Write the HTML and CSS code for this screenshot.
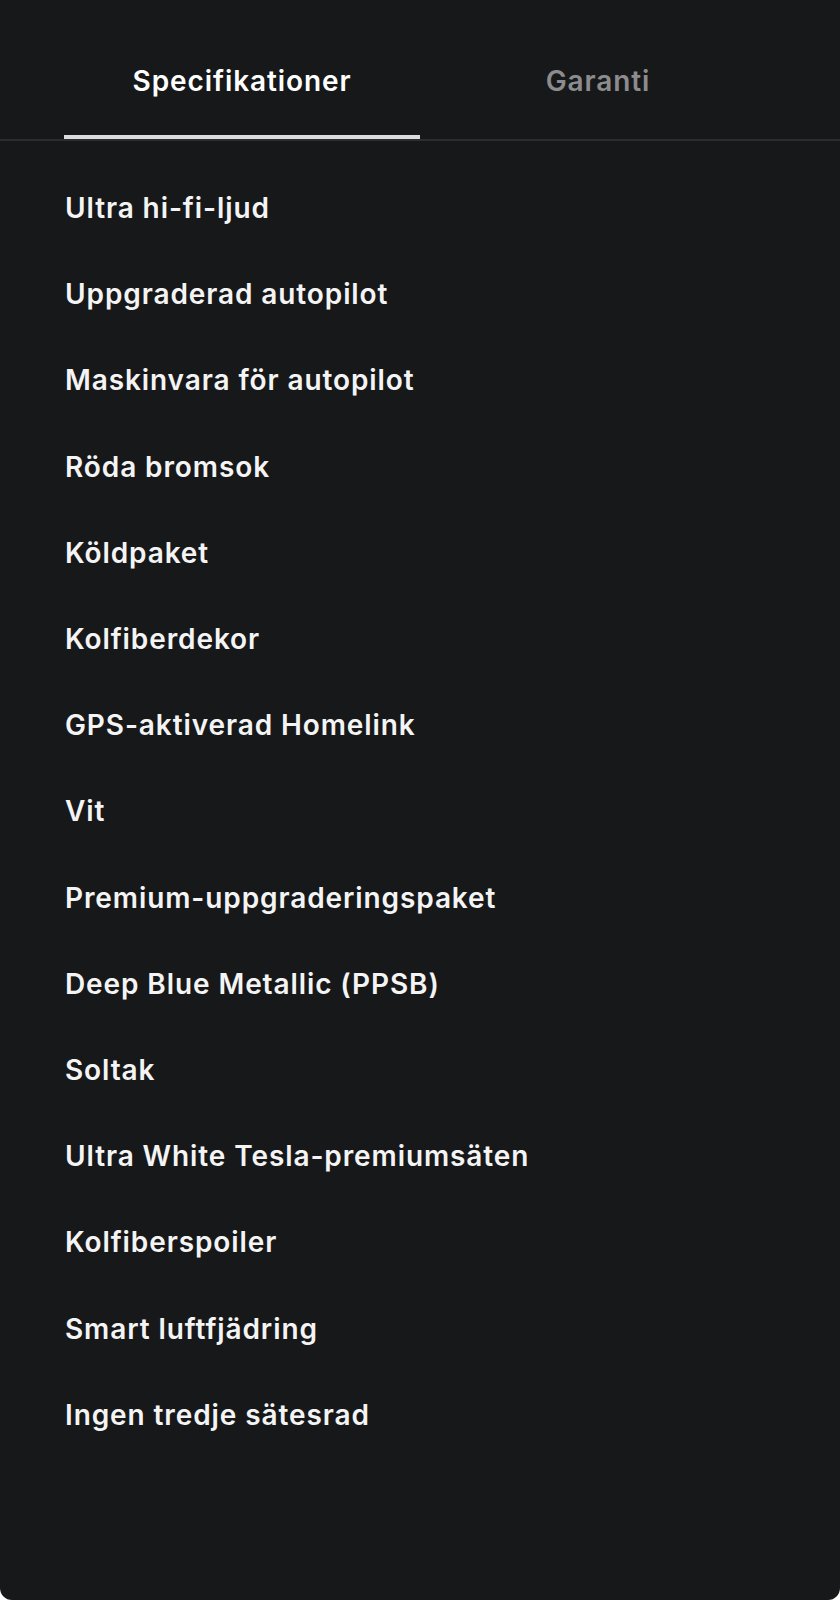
FILE: index.html
```html
<!DOCTYPE html>
<html lang="sv">
<head>
  <meta charset="utf-8">
  <title>Specifikationer</title>
  <link rel="stylesheet" href="styles.css">
</head>
<body>
  <div class="panel">
    <div class="tabs">
      <div class="tab active">Specifikationer</div>
      <div class="tab">Garanti</div>
    </div>
    <ul class="spec-list">
      <li>Ultra hi-fi-ljud</li>
      <li>Uppgraderad autopilot</li>
      <li>Maskinvara för autopilot</li>
      <li>Röda bromsok</li>
      <li>Köldpaket</li>
      <li>Kolfiberdekor</li>
      <li>GPS-aktiverad Homelink</li>
      <li>Vit</li>
      <li>Premium-uppgraderingspaket</li>
      <li>Deep Blue Metallic (PPSB)</li>
      <li>Soltak</li>
      <li>Ultra White Tesla-premiumsäten</li>
      <li>Kolfiberspoiler</li>
      <li>Smart luftfjädring</li>
      <li>Ingen tredje sätesrad</li>
    </ul>
  </div>
</body>
</html>
```

FILE: styles.css
```css
body {
  margin: 0;
  background-color: #ffffff;
  font-family: Inter, "Noto Sans", sans-serif;
}

.panel {
  min-height: 1600px;
  box-sizing: border-box;
  background-color: #17181a;
  border-radius: 0 0 12px 12px;
  color: #ffffff;
}

.tabs {
  display: flex;
  padding: 0 64px;
  border-bottom: 2px solid #2c2d30;
}

.tab {
  flex: 1;
  padding: 63px 0 36px;
  border-bottom: 4px solid transparent;
  font-size: 28px;
  line-height: 36px;
  font-weight: 600;
  letter-spacing: 0.9px;
  text-align: center;
  color: #8c8c8e;
}

.tab.active {
  color: #ffffff;
  border-bottom-color: #dcdcdc;
}

.spec-list {
  list-style: none;
  margin: 0;
  padding: 24px 64px 0 65px;
}

.spec-list li {
  padding: 25.1px 0;
  font-size: 28px;
  line-height: 36px;
  font-weight: 600;
  letter-spacing: 0.9px;
  color: #f4f4f4;
}
```
